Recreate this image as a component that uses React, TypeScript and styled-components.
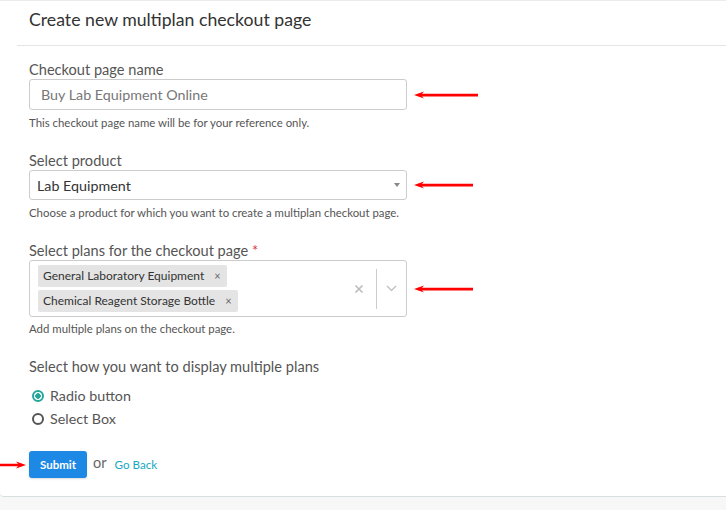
import React from "react";
import styled, { createGlobalStyle } from "styled-components";

const GlobalStyle = createGlobalStyle`
  html, body {
    margin: 0;
    padding: 0;
    background: #f5f6f6;
  }
  body {
    font-family: Lato, "Open Sans", Arial, sans-serif;
    color: #555;
  }
`;

const Page = styled.div`
  width: 726px;
  height: 510px;
  overflow: hidden;
  background: linear-gradient(#eceeee, #f7f7f7 8px, #f7f7f7);
`;

const Card = styled.div`
  background: #fff;
  border-top: 1px solid #ececec;
  border-bottom: 1px solid #d9dfe0;
  border-bottom-left-radius: 4px;
  height: 497px;
  box-sizing: border-box;
`;

const Header = styled.div`
  height: 45px;
  box-sizing: border-box;
  margin-left: 17px;
  padding: 8px 0 0 12px;
  border-bottom: 1px solid #e4e4e4;
`;

const Title = styled.h1`
  margin: 0;
  font-size: 17.7px;
  font-weight: 400;
  color: #333;
`;

const Form = styled.div`
  padding: 15px 0 0 29px;
`;

const Field = styled.div<{ $gap?: number }>`
  margin-bottom: ${(p) => p.$gap ?? 23}px;
`;

const Label = styled.div`
  font-size: 14.6px;
  color: #555;
  line-height: 17px;
  margin-bottom: 1px;
`;

const Required = styled.span`
  color: #d9334f;
`;

const Row = styled.div`
  display: flex;
  align-items: center;
  gap: 7px;
`;

const Control = styled.div<{ $h: number }>`
  width: 378px;
  height: ${(p) => p.$h}px;
  box-sizing: border-box;
  border: 1px solid #ccc;
  border-radius: 3px;
  background: #fff;
  display: flex;
  align-items: center;
  font-size: 14.3px;
`;

const InputText = styled.span`
  padding-left: 11px;
  color: #777;
`;

const SelectText = styled.span`
  flex: 1;
  padding-left: 7px;
  color: #333;
`;

const Caret = styled.span`
  width: 0;
  height: 0;
  border-left: 3px solid transparent;
  border-right: 3px solid transparent;
  border-top: 4px solid #888;
  margin-right: 6px;
`;

const Tags = styled.div`
  flex: 1;
  display: flex;
  flex-direction: column;
  align-items: flex-start;
  gap: 3px;
  padding-left: 8px;
  margin-top: -1px;
`;

const Tag = styled.span`
  display: inline-flex;
  align-items: center;
  height: 22px;
  padding: 0 6px 0 5px;
  background: #e4e4e4;
  border-radius: 2px;
  font-size: 12px;
  color: #333;
`;

const TagX = styled.span`
  margin-left: 10px;
  font-size: 11px;
  color: #666;
`;

const Indicators = styled.div`
  display: flex;
  align-items: center;
  height: 100%;
`;

const ClearBox = styled.span`
  display: flex;
  padding: 0 12px 0 10px;
`;

const Separator = styled.span`
  width: 1px;
  height: 40px;
  background: #ccc;
`;

const ChevronBox = styled.span`
  display: flex;
  padding: 0 9px;
`;

const Help = styled.div<{ $top?: number }>`
  font-size: 11.4px;
  line-height: 13px;
  color: #555;
  margin-top: ${(p) => p.$top ?? 6}px;
`;

const RadioGroup = styled.div`
  margin-top: 9px;
`;

const RadioRow = styled.label`
  display: flex;
  align-items: center;
  gap: 6px;
  font-size: 14.3px;
  color: #555;
  height: 23px;
  padding-left: 3px;
`;

const RadioDot = styled.span<{ $checked?: boolean }>`
  width: 12px;
  height: 12px;
  box-sizing: border-box;
  border-radius: 50%;
  border: 2px solid ${(p) => (p.$checked ? "#26a69a" : "#555")};
  background: ${(p) => (p.$checked ? "radial-gradient(circle, #26a69a 0 2.5px, #fff 3px)" : "#fff")};
`;

const Actions = styled.div`
  display: flex;
  align-items: center;
  margin-left: -29px;
  margin-top: 21px;
`;

const Button = styled.button`
  height: 27px;
  padding: 0 11px;
  margin-left: 3px;
  border: none;
  border-radius: 3px;
  background: #1e88e5;
  color: #fff;
  font-family: Lato, Arial, sans-serif;
  font-size: 11.5px;
  font-weight: 700;
  box-shadow: 0 1px 2px rgba(0, 0, 0, 0.15);
`;

const Or = styled.span`
  font-size: 14.5px;
  color: #666;
  margin: 0 8px 4px 6px;
`;

const BackLink = styled.a`
  font-size: 11.6px;
  color: #17a8c0;
  text-decoration: none;
`;

const Arrow = ({ width }: { width: number }) => (
  <svg width={width} height="8" viewBox={`0 0 ${width} 8`}>
    <polygon points={`0,4 10,0.5 8,2.8 ${width},2.8 ${width},5.4 8,5.4 10,7.5`} fill="#f00" />
  </svg>
);

const RightArrow = () => (
  <svg width="26" height="8" viewBox="0 0 26 8">
    <polygon points="26,4 16,0.5 18,2.8 0,2.8 0,5.2 18,5.2 16,7.5" fill="#f00" />
  </svg>
);

const Cross = () => (
  <svg width="10" height="10" viewBox="0 0 10 10">
    <path d="M1.5 1.5 L8.5 8.5 M8.5 1.5 L1.5 8.5" stroke="#bbb" strokeWidth="1.6" />
  </svg>
);

const Chevron = () => (
  <svg width="11" height="7" viewBox="0 0 11 7">
    <path d="M1 1 L5.5 5.5 L10 1" stroke="#bbb" strokeWidth="1.2" fill="none" />
  </svg>
);

export default function App() {
  return (
    <Page>
      <GlobalStyle />
      <Card>
        <Header>
          <Title>Create new multiplan checkout page</Title>
        </Header>
        <Form>
          <Field>
            <Label>Checkout page name</Label>
            <Row>
              <Control $h={31}>
                <InputText>Buy Lab Equipment Online</InputText>
              </Control>
              <Arrow width={64} />
            </Row>
            <Help>This checkout page name will be for your reference only.</Help>
          </Field>

          <Field>
            <Label>Select product</Label>
            <Row>
              <Control $h={30}>
                <SelectText>Lab Equipment</SelectText>
                <Caret />
              </Control>
              <Arrow width={59} />
            </Row>
            <Help>Choose a product for which you want to create a multiplan checkout page.</Help>
          </Field>

          <Field>
            <Label>
              Select plans for the checkout page <Required>*</Required>
            </Label>
            <Row>
              <Control $h={57}>
                <Tags>
                  <Tag>
                    General Laboratory Equipment<TagX>×</TagX>
                  </Tag>
                  <Tag>
                    Chemical Reagent Storage Bottle<TagX>×</TagX>
                  </Tag>
                </Tags>
                <Indicators>
                  <ClearBox>
                    <Cross />
                  </ClearBox>
                  <Separator />
                  <ChevronBox>
                    <Chevron />
                  </ChevronBox>
                </Indicators>
              </Control>
              <Arrow width={59} />
            </Row>
            <Help $top={5}>Add multiple plans on the checkout page.</Help>
          </Field>

          <Field $gap={0}>
            <Label>Select how you want to display multiple plans</Label>
            <RadioGroup>
              <RadioRow>
                <RadioDot $checked />
                Radio button
              </RadioRow>
              <RadioRow>
                <RadioDot />
                Select Box
              </RadioRow>
            </RadioGroup>
          </Field>

          <Actions>
            <RightArrow />
            <Button>Submit</Button>
            <Or>or</Or>
            <BackLink href="#">Go Back</BackLink>
          </Actions>
        </Form>
      </Card>
    </Page>
  );
}
